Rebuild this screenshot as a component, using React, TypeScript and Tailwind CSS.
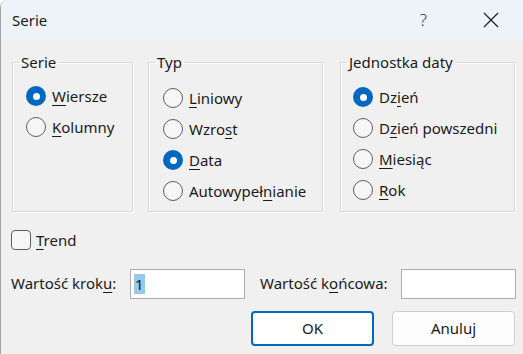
import React from 'react';

const font = { fontFamily: '"Noto Sans", "Open Sans", Arial, sans-serif' };

function U({ children }: { children: React.ReactNode }) {
  return <span className="underline underline-offset-[3px] decoration-1">{children}</span>;
}

function Radio({ checked, children }: { checked?: boolean; children: React.ReactNode }) {
  return (
    <div className="flex items-center gap-[6px] h-[20px]">
      {checked ? (
        <span className="w-[20px] h-[20px] rounded-full bg-[#0067c0] flex items-center justify-center shrink-0">
          <span className="w-[7px] h-[7px] rounded-full bg-white" />
        </span>
      ) : (
        <span className="w-[20px] h-[20px] rounded-full border border-[#5d5d5d] bg-[#f6f6f6] shrink-0" />
      )}
      <span className="text-[15px] text-[#1a1a1a] leading-[20px]">{children}</span>
    </div>
  );
}

function Group({ title, width, pad, children }: { title: string; width: string; pad: string; children: React.ReactNode }) {
  return (
    <fieldset className={`${width} h-[160px] border border-[#d9d9d9] shadow-[inset_1px_1px_0_#ffffff,1px_1px_0_#ffffff]`}>
      <legend className="ml-[6px] px-[2px] text-[15px] leading-[20px] text-[#1a1a1a]">{title}</legend>
      <div className={`flex flex-col gap-[11px] ${pad}`}>{children}</div>
    </fieldset>
  );
}

export default function App() {
  return (
    <div className="w-[523px] h-[354px] bg-[#f0f0f0] border-l border-[#a3a3a3] rounded-tl-[8px] overflow-hidden flex flex-col" style={font}>
      <div className="h-[40px] bg-[#eef3f9] flex items-center pl-[11px] shrink-0">
        <span className="text-[15px] text-[#1a1a1a]">Serie</span>
        <span className="ml-auto text-[17px] text-[#333] mr-[56px] font-light">?</span>
        <svg width="16" height="16" viewBox="0 0 16 16" className="mr-[24px]">
          <path d="M1 1 L15 15 M15 1 L1 15" stroke="#222" strokeWidth="1.3" />
        </svg>
      </div>

      <div className="flex pl-[11px] pt-[12px]">
        <Group title="Serie" width="w-[121px]" pad="pl-[13px] pt-[14px]">
          <Radio checked>
            <U>W</U>iersze
          </Radio>
          <Radio>
            <U>K</U>olumny
          </Radio>
        </Group>
        <div className="w-[15px]" />
        <Group title="Typ" width="w-[175px]" pad="pl-[14px] pt-[16px]">
          <Radio>
            <U>L</U>iniowy
          </Radio>
          <Radio>
            Wzro<U>s</U>t
          </Radio>
          <Radio checked>
            <U>D</U>ata
          </Radio>
          <Radio>
            Autowypeł<U>n</U>ianie
          </Radio>
        </Group>
        <div className="w-[17px]" />
        <Group title="Jednostka daty" width="w-[175px]" pad="pl-[12px] pt-[15px]">
          <Radio checked>
            Dz<U>i</U>eń
          </Radio>
          <Radio>
            D<U>z</U>ień powszedni
          </Radio>
          <Radio>
            <U>M</U>iesiąc
          </Radio>
          <Radio>
            <U>R</U>ok
          </Radio>
        </Group>
      </div>

      <div className="flex items-center gap-[5px] pl-[10px] mt-[17px]">
        <span className="w-[20px] h-[20px] rounded-[4px] border border-[#5d5d5d] bg-[#f6f6f6]" />
        <span className="text-[15px] text-[#1a1a1a]">
          <U>T</U>rend
        </span>
      </div>

      <div className="flex items-center pl-[10px] mt-[17px]">
        <span className="text-[15px] text-[#1a1a1a] w-[119px]">
          Wartość krok<U>u</U>:
        </span>
        <div className="w-[115px] h-[30px] bg-white border border-[#adadad] flex items-center pl-[3px]">
          <span className="bg-[#99c9ef] text-[15px] text-[#1a1a1a] leading-[20px] px-[1px]">1</span>
        </div>
        <span className="text-[15px] text-[#1a1a1a] ml-[15px] w-[141px]">
          Wartość k<U>o</U>ńcowa:
        </span>
        <div className="w-[115px] h-[30px] bg-white border border-[#adadad]" />
      </div>

      <div className="flex gap-[18px] pl-[250px] mt-[12px]">
        <button className="w-[123px] h-[35px] rounded-[4px] border-2 border-[#0067c0] bg-white text-[15px] text-[#1a1a1a]">
          OK
        </button>
        <button className="w-[123px] h-[35px] rounded-[4px] border border-[#d0d0d0] bg-[#fdfdfd] text-[15px] text-[#1a1a1a]">
          Anuluj
        </button>
      </div>
    </div>
  );
}
